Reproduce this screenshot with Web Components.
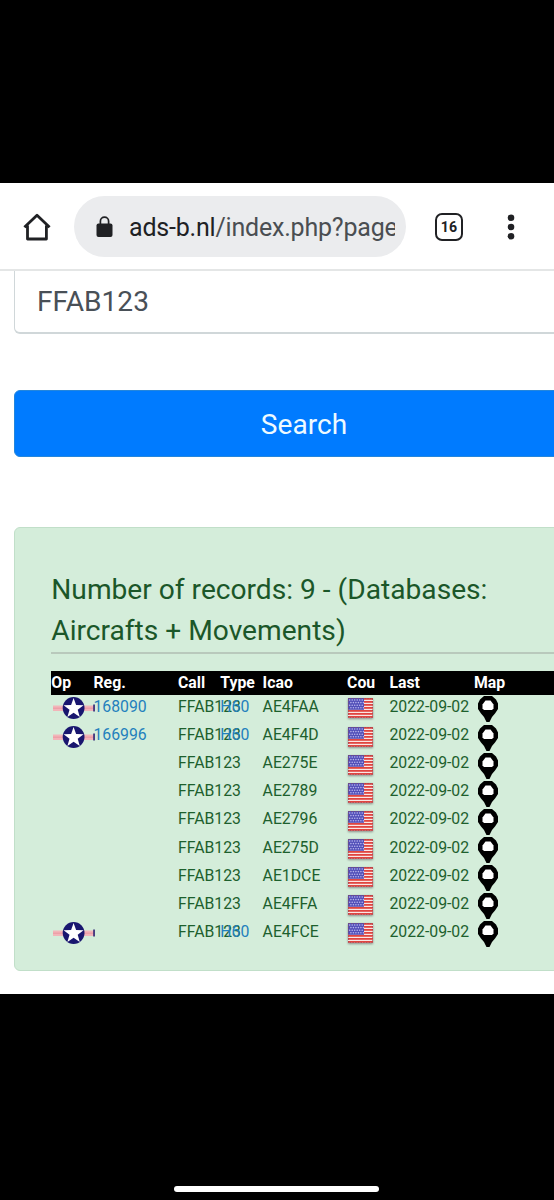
<!DOCTYPE html>
<html lang="en">
<head>
<meta charset="utf-8">
<title>ads-b.nl</title>
<style>
html,body{margin:0;background:#000;font-family:Roboto,sans-serif}
body{width:554px;height:1200px;overflow:hidden}
</style>
</head>
<body>
<phone-screen>
  <browser-bar slot="bar" tabs="16"><span slot="host">ads-b.nl</span><span slot="path">/index.php?page</span></browser-bar>
  <search-form>FFAB123</search-form>
  <record-panel>Number of records: 9 - (Databases: Aircrafts + Movements)</record-panel>
</phone-screen>
<script>
function define(name, render) {
  customElements.define(name, class extends HTMLElement {
    connectedCallback() {
      if (!this.shadowRoot) this.attachShadow({mode: 'open'}).innerHTML = render(this);
    }
  });
}

define('phone-screen', () => `
<style>
:host{display:flex;flex-direction:column;height:1200px;background:#000}
.window{margin-top:183px;height:811px;background:#fff;overflow:hidden;flex:none}
.handle{width:205px;height:6px;border-radius:3px;background:#fff;margin:191.5px 0 0 174px}
</style>
<div class="window"><slot name="bar"></slot><slot></slot></div><div class="handle"></div>`);

define('browser-bar', el => `
<style>
:host{display:flex;align-items:center;height:86px;border-bottom:2px solid #e4e6e6;color:#202124}
svg{flex:none;display:block}
.home{margin:2px 0 0 22px}
.pill{display:flex;align-items:center;width:332px;height:61px;border-radius:31px;background:#ebecee;margin:1px 0 0 22px;box-sizing:border-box;padding:0 11px 0 22px}
.url{margin:2px 0 0 16px;width:266px;overflow:hidden;white-space:nowrap;font-size:25px;letter-spacing:-.2px;line-height:40px;color:#4a4e52;height:40px}
.host{color:#202124}
.tabs{box-sizing:border-box;width:28px;height:28px;border:2.7px solid #202124;border-radius:7px;margin:1px 0 0 29px;display:flex;align-items:center;justify-content:center;font-weight:700;font-size:14.2px;line-height:14px}
.menu{margin:1px 0 0 43px}
</style>
<svg class="home" width="30" height="30" viewBox="0 0 30 30"><path d="M2.4 15.3 15 3.3 27.6 15.3M5.5 13.5V27h18.9V13.5" fill="none" stroke="#202124" stroke-width="2.8" stroke-linejoin="round"/></svg>
<div class="pill"><svg width="17" height="22" viewBox="0 0 17 22"><rect x=".5" y="7.5" width="16" height="13.5" rx="2" fill="#202124"/><path d="M4.4 8V5.3a4.1 4.1 0 0 1 8.2 0V8" fill="none" stroke="#202124" stroke-width="1.7"/></svg>
<div class="url"><span class="host"><slot name="host"></slot></span><slot name="path"></slot></div></div>
<div class="tabs">${el.getAttribute('tabs')}</div>
<svg class="menu" width="10" height="28" viewBox="0 0 10 28"><g fill="#202124"><circle cx="5" cy="4.700" r="3.3"/><circle cx="5" cy="14" r="3.3"/><circle cx="5" cy="23.2" r="3.3"/></g></svg>`);

define('search-form', () => `
<style>
:host{display:block;padding-left:14px}
.field{height:63px;width:600px;box-sizing:border-box;border:1.5px solid #d0d7d9;border-bottom-width:2px;border-top:0;border-radius:0 0 6px 6px;padding-left:22px;color:#495057;font-size:28.1px;line-height:61px}
.button{margin-top:56px;width:580px;height:67px;box-sizing:border-box;border-radius:6px;background:#007bff;border:1px solid #2486dc;color:#eefaff;font-size:28.1px;line-height:67px;text-align:center}
</style>
<div class="field"><slot></slot></div><div class="button">Search</div>`);

define('op-roundel', () => `
<style>:host{display:block}svg{display:block}</style>
<svg width="45" height="24" viewBox="0 0 45 24"><path d="M2 9.500h41v5.500H2z" fill="#f2b5b9"/><path d="M2 11.400h41v1.500H2z" fill="#eda0a8"/><path d="M42.200 8.500h1.700v7h-1.700z" fill="#352b78"/><circle cx="22.600" cy="12" r="10.900" fill="#19166f"/><path d="m22.600 1.900 2.500 7.100 7.500.2-5.900 4.500 2.100 7.200-6.200-4.200-6.200 4.200 2.100-7.200-5.900-4.500 7.500-.2z" fill="#fff"/></svg>`);

define('us-flag', () => {
  let s = '';
  for (let i = 0; i < 7; i++) s += `<path d="M0 ${i * 3}h25v1.800H0z" fill="#e0453f"/>`;
  let stars = '';
  for (let y = 0; y < 4; y++) for (let x = 0; x < 6; x++) stars += `<circle cx="${1.700 + x * 2.500 + (y % 2) * 1.200}" cy="${2 + y * 2.600}" r=".8" fill="#b7b4ec"/>`;
  return `<style>:host{display:block;filter:drop-shadow(0 1px 1px #8a8f8a)}svg{display:block}</style>
<svg width="25" height="20" viewBox="0 0 25 20"><path d="M0 0h25v20H0z" fill="#f9e6e4"/>${s}<path d="M0 0h16v11.800H0z" fill="#514fb8"/>${stars}<path d="M.4.4h24.200v19.200H.4z" fill="none" stroke="#8b4a5a" stroke-width=".7" stroke-dasharray="1.500 1.200"/></svg>`;
});

define('map-pin', () => `
<style>:host{display:block}svg{display:block}</style>
<svg width="20" height="27" viewBox="0 0 20 27"><path d="M6 0h8l4 3.500 2 4v5.500l-3 4.500-3 3.500-2.500 5h-3L6 21l-3-3.500-3-4.500V7.500l2-4z" fill="#000"/><path d="M7.500 4.500h5l1.500 2 1.500 2v4L14 14H6l-1.500-1.500v-4L6 6.500z" fill="#fff"/></svg>`);

define('record-row', el => {
  const [reg, type, icao, op] = ['reg', 'type', 'icao', 'op'].map(a => el.getAttribute(a) || '');
  return `
<style>
:host{display:grid;grid-template-columns:42.2px 84.5px 42.3px 42.3px 84.500px 42.3px 84.5px 80px;height:28.13px;line-height:24.600px;font-size:15.8px;color:#1d602d;white-space:nowrap}
.link{color:#2380bd}
op-roundel{margin:1.500px 0 0 -.5px}
us-flag{margin:3.500px 0 0 .9px}
map-pin{margin:1.500px 0 0 4.500px}
</style>
<div>${op ? '<op-roundel></op-roundel>' : ''}</div><div class="link">${reg}</div><div>FFAB123</div><div class="link">${type}</div><div>${icao}</div><div><us-flag></us-flag></div><div>2022-09-02</div><div><map-pin></map-pin></div>`;
});

define('record-panel', () => {
  const rows = [['168090', 'H60', 'AE4FAA', 1], ['166996', 'H60', 'AE4F4D', 1], ['', '', 'AE275E', ''], ['', '', 'AE2789', ''], ['', '', 'AE2796', ''], ['', '', 'AE275D', ''], ['', '', 'AE1DCE', ''], ['', '', 'AE4FFA', ''], ['', 'H60', 'AE4FCE', 1]];
  return `
<style>
:host{display:block;box-sizing:border-box;width:600px;height:444px;margin:70px 0 0 14px;background:#d4edda;border:1.5px solid #c1dfc9;border-radius:6px;padding:41px 0 0 36.300px}
h4{margin:0;width:460px;font-weight:400;font-size:28.150px;line-height:41.300px;color:#1b5729}
.rule{height:2px;background:#b9c9bc;margin-top:.4px}
.head{display:grid;grid-template-columns:42.2px 84.5px 42.3px 42.3px 84.500px 42.3px 84.5px 80px;height:24px;margin-top:17px;background:#000;color:#fff;font-weight:700;font-size:15.8px;line-height:24.500px;width:600px}
.cut{width:28px;overflow:hidden}
</style>
<h4><slot></slot></h4><div class="rule"></div>
<div class="head"><span>Op</span><span>Reg.</span><span>Call</span><span>Type</span><span>Icao</span><span class="cut">Cou</span><span>Last</span><span>Map</span></div>
${rows.map(r => `<record-row reg="${r[0]}" type="${r[1]}" icao="${r[2]}" op="${r[3]}"></record-row>`).join('')}`;
});
</script>
</body>
</html>
